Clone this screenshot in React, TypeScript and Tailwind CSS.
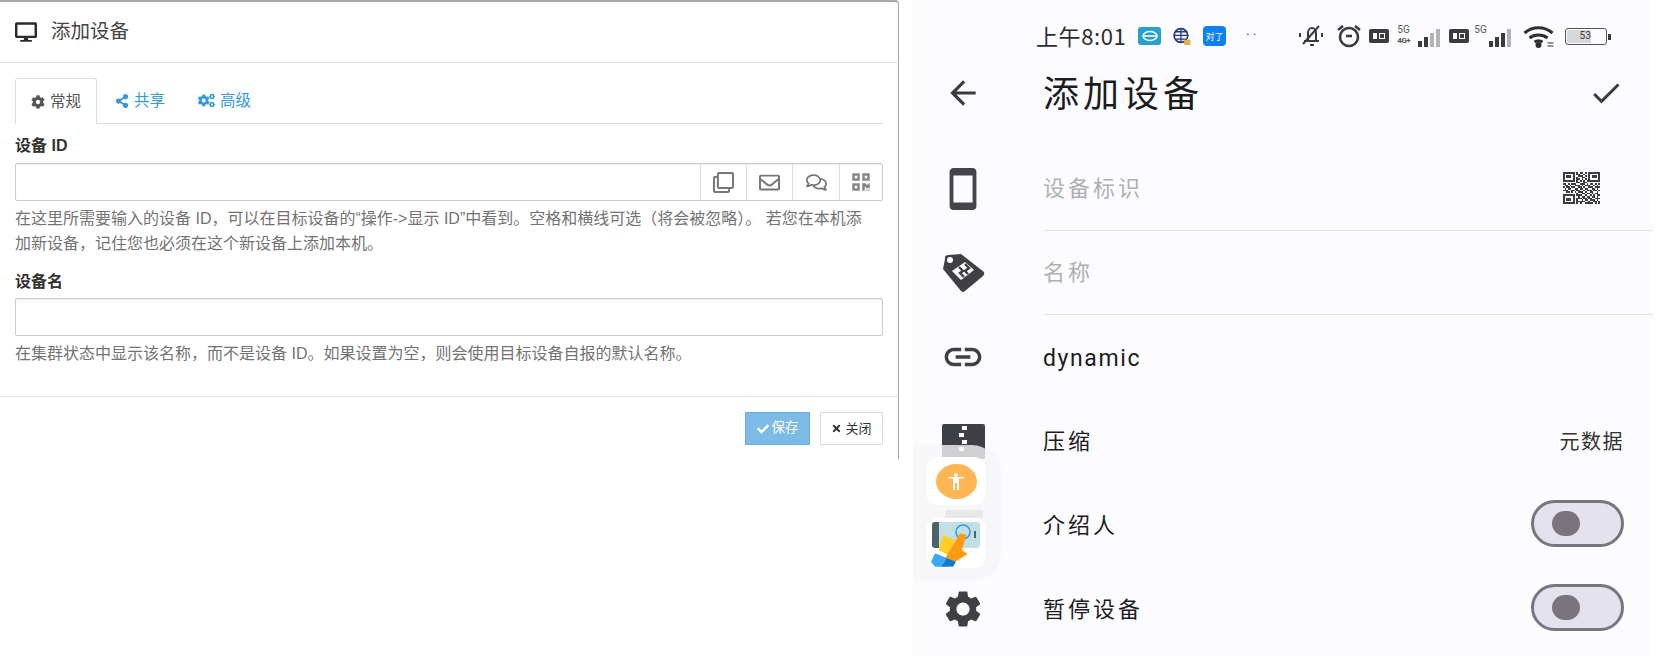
import React from "react";
import { FaDesktop, FaCog, FaShareAlt, FaCogs, FaCheck, FaTimes, FaRegClone, FaRegEnvelope, FaRegComments, FaQrcode } from "react-icons/fa";
import { MdArrowBack, MdCheck, MdSmartphone, MdLink, MdSettings } from "react-icons/md";

const cjk = { fontFamily: '"Noto Sans CJK SC", "Noto Sans", sans-serif' };
const latinFirst = { fontFamily: '"Liberation Sans", "Noto Sans CJK SC", sans-serif' };
const rob = { fontFamily: 'Roboto, "Noto Sans CJK SC", sans-serif' };

const QR_ROWS = [
  "1111111010110101111111",
  "1000001011001001000001",
  "1011101001110101011101",
  "1011101010011001011101",
  "1000001011010101000001",
  "1111111010101011111111",
  "0000000011001100000000",
  "1101011100111010110101",
  "0110100111010111001010",
  "1011011001101001110111",
  "0101100110110110011010",
  "1110011011001011101101",
  "0011010101110100110010",
  "0000000010011011010110",
  "1111111011100100101011",
  "1000001001011011011010",
  "1011101011101101100111",
  "1011101010010110111010",
  "1000001011111001001101",
  "1111111010100111110101",
];

function DenseQr() {
  return (
    <svg width="37" height="32" viewBox="0 0 22 20" preserveAspectRatio="none" shapeRendering="crispEdges">
      {QR_ROWS.flatMap((row, y) =>
        row.split("").map((c, x) => (c === "1" ? <rect key={`${x}-${y}`} x={x} y={y} width="1" height="1" fill="#3c3c42" /> : null))
      )}
    </svg>
  );
}

function Signal({ dark }: { dark: number }) {
  const hs = [6, 10, 14, 18];
  return (
    <svg width="24" height="20" viewBox="0 0 24 20">
      {hs.map((h, i) => (
        <rect key={i} x={i * 6} y={20 - h} width="4" height={h} fill={i < dark ? "#3a3a3f" : "#b4b4b8"} />
      ))}
    </svg>
  );
}

function HdBox() {
  return (
    <div className="w-[20px] h-[14px] bg-[#3a3a3f] rounded-[2px] flex items-center justify-center gap-[2px]">
      <div className="w-[4px] h-[6px] bg-white" />
      <div className="w-[6px] h-[6px] border border-white" />
    </div>
  );
}

function StatusBar() {
  return (
    <div className="h-[60px] pt-[22px] pl-[123px] flex items-start" style={rob}>
      <span className="text-[22px] leading-[26px] text-[#2c2c30] w-[102px] tracking-[0.6px] whitespace-nowrap" style={cjk}>上午8:01</span>
      <div className="mt-[5px] w-[23px] h-[18px] rounded-[3px] bg-[#26a0cc] flex items-center justify-center">
        <svg width="16" height="12" viewBox="0 0 16 12" fill="none" stroke="white" strokeWidth="1.5"><ellipse cx="8" cy="6" rx="7" ry="4.5" /><path d="M1 6h14" /></svg>
      </div>
      <svg className="mt-[5px] ml-[11px]" width="20" height="19" viewBox="0 0 18 18" fill="none">
        <circle cx="8" cy="8" r="6.5" stroke="#23367e" strokeWidth="1.6" />
        <path d="M1.5 8h13M8 1.5v13M3 4.5h10M3 11.5h10" stroke="#23367e" strokeWidth="1.2" />
        <rect x="11" y="12" width="6" height="5" fill="#e0b23c" />
      </svg>
      <div className="mt-[4px] ml-[11px] w-[23px] h-[20px] rounded-[4px] bg-[#0d80f2] flex items-center justify-center text-[9px] leading-none text-white" style={cjk}>对了</div>
      <span className="ml-[20px] mt-[3px] text-[14px] leading-[20px] text-[#55555a] tracking-[3px]">··</span>
      <svg className="ml-[38px] mt-[2px]" width="29" height="24" viewBox="0 0 25 24" fill="none" stroke="#3a3a3f" strokeWidth="2">
        <path d="M5 17h15M9 17V9c0-3 2-5 4-5s4 2 4 5v8M11 21h4" />
        <path d="M4 20L20 2" />
        <path d="M1 9v4M23 9v4" />
      </svg>
      <svg className="ml-[10px] mt-[2px]" width="26" height="24" viewBox="0 0 26 24" fill="none" stroke="#3a3a3f" strokeWidth="2.6">
        <circle cx="13" cy="13" r="9" />
        <path d="M2 6l5-4M24 6l-5-4" />
        <path d="M10 12h6" />
      </svg>
      <div className="ml-[7px] mt-[7px]"><HdBox /></div>
      <div className="ml-[8px] w-[20px] mt-[2px] flex flex-col text-[10px] leading-[11px] text-[#55555a]">
        <span>5G</span>
        <span className="text-[8px] tracking-[-0.5px] font-bold">4G+</span>
      </div>
      <div className="mt-[5px] ml-[1px]"><Signal dark={2} /></div>
      <div className="ml-[7px] mt-[7px]"><HdBox /></div>
      <span className="ml-[5px] mt-[2px] text-[10px] leading-[11px] text-[#55555a]">5G</span>
      <div className="mt-[5px] ml-[2px]"><Signal dark={3} /></div>
      <svg className="ml-[10px] mt-[4px]" width="33" height="22" viewBox="0 0 32 22" fill="none" stroke="#2f2f33" strokeWidth="3">
        <path d="M1 7c8-7 20-7 28 0M6 12c5-4 13-4 18 0M11 16c3-2 5-2 8 0" />
        <circle cx="15" cy="19" r="1.5" fill="#2f2f33" />
        <path d="M24 17h6M24 20h6" strokeWidth="1.2" />
      </svg>
      <div className="ml-[9px] mt-[6px] flex items-center">
        <div className="w-[42px] h-[17px] rounded-[3px] border-[1.5px] border-[#55555a] p-[1px] flex">
          <div className="w-[24px] bg-[#d8d8da] text-[10px] leading-[12px] text-[#3a3a3f] text-right">53</div>
        </div>
        <div className="w-[3px] h-[6px] bg-[#3a3a3f] ml-[1px]" />
      </div>
    </div>
  );
}

function Row({ icon, children, right, border }: { icon: React.ReactNode; children: React.ReactNode; right?: React.ReactNode; border?: boolean }) {
  return (
    <div className="h-[84px] flex items-stretch">
      <div className="w-[130px] pr-[30px] flex items-center justify-center shrink-0">{icon}</div>
      <div className={`flex-1 flex items-center justify-between pr-[29px] ${border ? "border-b border-[#e3e2e5]" : ""}`}>
        <div className="-mt-[4px]">{children}</div>
        {right}
      </div>
    </div>
  );
}

function Toggle() {
  return (
    <div className="-mt-[4px] w-[93px] h-[47px] rounded-full border-[3px] border-[#79747e] bg-[#e4e2ec] flex items-center pl-[18px]">
      <div className="w-[28px] h-[25px] rounded-full bg-[#79747e]" />
    </div>
  );
}

function TagIcon() {
  return (
    <svg width="44" height="40" viewBox="0 0 44 40">
      <path d="M4 6 Q3 2 8 2 L20 1 L43 19 Q44 21 42 23 L24 38 Q22 40 20 38 L2 16 Z" fill="#3f3f46" />
      <circle cx="9" cy="7" r="3" fill="#fcfbfe" />
      <path d="M11 18 L24 9 L33 17 L20 27 Z" fill="#fcfbfe" />
      <path d="M18 14l4 4-3 2 4 4M24 11l4 4-4 3 3 3" stroke="#3f3f46" strokeWidth="2.4" fill="none" />
    </svg>
  );
}

function ZipIcon() {
  return (
    <div className="w-[43px] h-[35px] bg-[#3f3f46] rounded-[2px] flex flex-col items-center pt-[2px] gap-[3px] self-start mt-[25px]">
      <div className="w-[5px] h-[4px] bg-white ml-[3px]" />
      <div className="w-[5px] h-[4px] bg-white -ml-[3px]" />
      <div className="w-[5px] h-[4px] bg-white ml-[3px]" />
      <div className="w-[5px] h-[4px] bg-white -ml-[3px]" />
    </div>
  );
}

function FloatDock() {
  return (
    <div className="absolute left-[913px] top-[445px] w-[85px] h-[133px] bg-[#f5f5f6]/80 rounded-r-[26px] shadow-[2px_1px_4px_rgba(0,0,0,0.04)]">
      <div className="absolute left-[13px] top-[12px] w-[60px] h-[48px] bg-white rounded-[12px] flex items-center justify-center">
        <div className="w-[41px] h-[35px] rounded-[50%] bg-[#ffb552] flex items-center justify-center">
          <svg width="16" height="18" viewBox="0 0 16 18" fill="white">
            <circle cx="8" cy="3" r="2" />
            <path d="M0 5h16v1.5h-5V18H9v-7H7v7H5V6.5H0z" />
          </svg>
        </div>
      </div>
      <div className="absolute left-[32px] top-[65px] w-[38px] h-[8px] bg-[#e8e8ea] rounded-t-[2px]" />
      <div className="absolute left-[13px] top-[73px] w-[60px] h-[50px] bg-white rounded-[12px] overflow-hidden">
        <svg width="60" height="50" viewBox="0 0 60 50">
          <rect x="6" y="4" width="48" height="26" rx="3" fill="#c2dfe6" />
          <path d="M13 4H9a3 3 0 0 0-3 3v20a3 3 0 0 0 3 3h4z" fill="#4a6468" />
          <rect x="48" y="13" width="2" height="7" fill="#4a6468" />
          <circle cx="37" cy="14" r="7" fill="none" stroke="#2d9be0" strokeWidth="1.5" />
          <path d="M17.3 17L29 22 22.3 37 12.3 32z" fill="#ffcf22" />
          <path d="M34 15.3L40.7 17 35.7 32 41.7 36 29 43.7 19 40.3z" fill="#ff9a12" />
          <path d="M9 35.3L29.7 43.7 27.3 48.7H9L5 43.7z" fill="#3aa9f5" />
          <path d="M20.7 40.3L29.7 43.7 27.3 48 15.7 48.7z" fill="#1478c8" />
        </svg>
      </div>
    </div>
  );
}

export default function App() {
  return (
    <div className="relative w-[1676px] h-[656px] bg-white flex items-start overflow-hidden" style={cjk}>
      <div className="w-[899px] h-[459px] shrink-0 border-t-2 border-r border-[#a8a8a8] rounded-tr-[4px] bg-white text-[#333]" style={latinFirst}>
        <div className="h-[61px] border-b border-[#e5e5e5] flex items-center pl-[15px]">
          <FaDesktop className="text-[22px] text-[#2b2b2b]" />
          <span className="ml-[14px] text-[19.5px] text-[#444]">添加设备</span>
        </div>
        <div className="pl-[15px] pr-[15px] pt-[15px]">
          <div className="flex h-[46px] border-b border-[#ddd] text-[15.5px]">
            <div className="w-[82px] h-[46px] border border-[#ddd] border-b-0 bg-white rounded-t-[3px] flex items-center justify-center gap-[5px] text-[#555]">
              <FaCog className="text-[14px]" /><span>常规</span>
            </div>
            <div className="ml-[18px] flex items-center gap-[5px] text-[#3498db]">
              <FaShareAlt className="text-[14px]" /><span>共享</span>
            </div>
            <div className="ml-[33px] flex items-center gap-[5px] text-[#3498db]">
              <FaCogs className="text-[17px]" /><span>高级</span>
            </div>
          </div>
          <div className="mt-[11px] text-[16px] leading-[22px] font-bold text-[#333]">设备 ID</div>
          <div className="mt-[6px] h-[38px] flex border border-[#ccc] rounded-[2px] shadow-[inset_0_1px_1px_rgba(0,0,0,0.08)]">
            <div className="flex-1" />
            <div className="w-[46px] border-l border-[#ddd] flex items-center justify-center text-[#777] text-[21px]"><FaRegClone /></div>
            <div className="w-[46px] border-l border-[#ddd] flex items-center justify-center text-[#777] text-[21px]"><FaRegEnvelope /></div>
            <div className="w-[47px] border-l border-[#ddd] flex items-center justify-center text-[#777] text-[21px]"><FaRegComments /></div>
            <div className="w-[43px] border-l border-[#ddd] flex items-center justify-center text-[#888] text-[20px]"><FaQrcode /></div>
          </div>
          <p className="mt-[5px] text-[16px] leading-[25px] text-[#737373] whitespace-nowrap">
            在这里所需要输入的设备 ID，可以在目标设备的“操作-&gt;显示 ID”中看到。空格和横线可选（将会被忽略）。 若您在本机添
            <br />
            加新设备，记住您也必须在这个新设备上添加本机。
          </p>
          <div className="mt-[15px] text-[16px] leading-[22px] font-bold text-[#333]">设备名</div>
          <div className="mt-[5px] h-[38px] border border-[#ccc] rounded-[2px] shadow-[inset_0_1px_1px_rgba(0,0,0,0.08)]" />
          <p className="mt-[5px] text-[16px] leading-[25px] text-[#737373] whitespace-nowrap">
            在集群状态中显示该名称，而不是设备 ID。如果设置为空，则会使用目标设备自报的默认名称。
          </p>
        </div>
        <div className="mt-[30px] border-t border-[#e5e5e5] pt-[15px] pr-[15px] flex justify-end gap-[10px]">
          <div className="w-[65px] h-[33px] bg-[#7cbbe8] border border-[#68aee0] flex items-center justify-center gap-[3px] text-white text-[13.5px]">
            <FaCheck className="text-[12px]" /><span>保存</span>
          </div>
          <div className="w-[63px] h-[33px] bg-white border border-[#ddd] flex items-center justify-center gap-[3px] text-[#333] text-[13px]">
            <FaTimes className="text-[11px]" /><span>关闭</span>
          </div>
        </div>
      </div>

      <div className="ml-[14px] w-[740px] h-[656px] shrink-0 bg-[#fcfbfe] text-[#1c1b1f]">
        <StatusBar />
        <div className="h-[66px] flex items-center pr-[29px]">
          <div className="w-[130px] pr-[30px] flex justify-center shrink-0"><MdArrowBack className="text-[38px] text-[#3a3a40]" /></div>
          <span className="flex-1 -mt-[4px] text-[36px] tracking-[4px] text-[#1c1b1f]">添加设备</span>
          <MdCheck className="text-[36px] text-[#3a3a40]" />
        </div>
        <div className="h-[21px]" />
        <Row border icon={<MdSmartphone className="text-[46px] text-[#44444c]" />} right={<div className="mr-[24px] -mt-[2px]"><DenseQr /></div>}>
          <span className="text-[22px] tracking-[3px] text-[#b0afb3]">设备标识</span>
        </Row>
        <Row border icon={<TagIcon />}>
          <span className="text-[22px] tracking-[3px] text-[#b0afb3]">名称</span>
        </Row>
        <Row icon={<MdLink className="text-[44px] text-[#3f3f46]" />}>
          <span className="relative top-[4px] text-[23px] tracking-[1.6px] text-[#1c1b1f]" style={rob}>dynamic</span>
        </Row>
        <Row icon={<ZipIcon />} right={<span className="text-[20px] tracking-[1.5px] text-[#333]">元数据</span>}>
          <span className="text-[22px] tracking-[3px]">压缩</span>
        </Row>
        <Row icon={null} right={<Toggle />}>
          <span className="text-[22px] tracking-[3px]">介绍人</span>
        </Row>
        <Row icon={<MdSettings className="text-[44px] text-[#3f3f46]" />} right={<Toggle />}>
          <span className="text-[22px] tracking-[3px]">暂停设备</span>
        </Row>
      </div>
      <FloatDock />
    </div>
  );
}
